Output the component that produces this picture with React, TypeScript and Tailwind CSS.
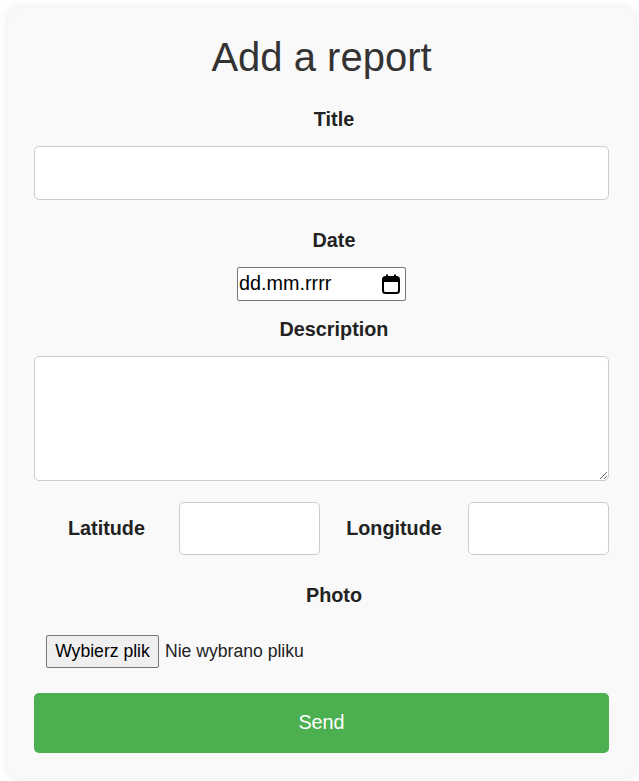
export default function App() {
  return (
    <div className="min-h-[781px] bg-white pt-[8px] font-['Liberation_Sans',Arial,sans-serif]">
      <form
        onSubmit={(e) => e.preventDefault()}
        className="ml-[8px] flex w-[626px] flex-col rounded-[10px] bg-[#f9f9f9] pl-[26px] pr-[25px] pt-[26px] pb-[25px] shadow-[0_0_10px_rgba(0,0,0,0.1)]"
      >
        <h1 className="h-[46px] text-center text-[40px] leading-[46px] text-[#333]">Add a report</h1>

        <label htmlFor="title" className="mt-[28px] pl-[25px] text-center text-[19.8px] font-bold leading-[23px] text-[#222]">
          Title
        </label>
        <input
          id="title"
          type="text"
          className="mt-[15px] h-[54px] w-full rounded-[5px] border border-[#ccc] bg-white px-[10px] text-[17.6px] outline-none"
        />

        <label className="mt-[29px] pl-[25px] text-center text-[19.8px] font-bold leading-[23px] text-[#222]">Date</label>
        <div className="mt-[15px] flex justify-center">
          <div className="flex h-[34px] w-[169px] items-center justify-between rounded-[2px] border border-[#767676] bg-white pl-[1px] pr-[5px]">
            <span className="text-[19.8px] text-black">dd.mm.rrrr</span>
            <svg width="18" height="20" viewBox="0 0 18 20" fill="none">
              <rect x="1" y="3" width="16" height="16" rx="2.5" stroke="#000" strokeWidth="2" />
              <rect x="1" y="3" width="16" height="5" fill="#000" />
              <rect x="4" y="0.5" width="2" height="4" fill="#000" />
              <rect x="12" y="0.5" width="2" height="4" fill="#000" />
            </svg>
          </div>
        </div>

        <label htmlFor="desc" className="mt-[17px] pl-[25px] text-center text-[19.8px] font-bold leading-[23px] text-[#222]">
          Description
        </label>
        <textarea
          id="desc"
          className="mt-[15px] h-[125px] w-full rounded-[5px] border border-[#ccc] bg-white p-[10px] text-[17.6px] outline-none"
        />

        <div className="mt-[21px] grid h-[53px] grid-cols-[145px_141px_1fr_141px] items-center">
          <label htmlFor="lat" className="text-center text-[19.8px] font-bold leading-[23px] text-[#222]">
            Latitude
          </label>
          <input id="lat" type="text" className="h-[53px] rounded-[5px] border border-[#ccc] bg-white px-[10px] outline-none" />
          <label htmlFor="lng" className="text-center text-[19.8px] font-bold leading-[23px] text-[#222]">
            Longitude
          </label>
          <input id="lng" type="text" className="h-[53px] rounded-[5px] border border-[#ccc] bg-white px-[10px] outline-none" />
        </div>

        <label className="mt-[29px] pl-[25px] text-center text-[19.8px] font-bold leading-[23px] text-[#222]">Photo</label>
        <div className="mt-[28px] flex h-[33px] items-center pl-[12px]">
          <button
            type="button"
            className="h-[33px] w-[113px] rounded-[2px] border border-[#767676] bg-[#efefef] text-[17.6px] text-black"
          >
            Wybierz plik
          </button>
          <span className="ml-[6px] text-[17.6px] text-[#222]">Nie wybrano pliku</span>
        </div>

        <button
          type="submit"
          className="mt-[25px] h-[60px] w-full rounded-[5px] bg-[#4caf50] text-[19.8px] text-white"
        >
          Send
        </button>
      </form>
    </div>
  );
}
